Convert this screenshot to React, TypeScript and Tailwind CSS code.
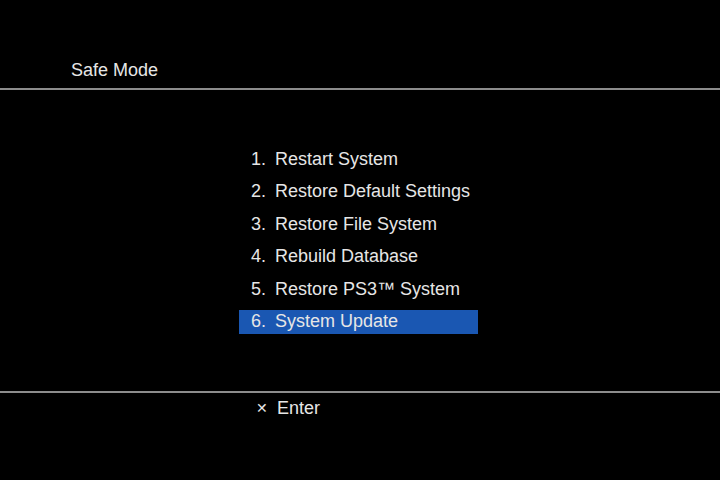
const items = [
  "Restart System",
  "Restore Default Settings",
  "Restore File System",
  "Rebuild Database",
  "Restore PS3\u2122 System",
  "System Update",
]

export default function App() {
  const selected = 5
  return (
    <div
      className="flex h-[480px] w-[720px] flex-col bg-black text-[#e6e6e6]"
      style={{ fontFamily: '"Liberation Sans", Arial, sans-serif' }}
    >
      <div className="flex h-[88px] items-end pb-[6px] pl-[71px]">
        <span className="text-[18px] leading-[24px]">Safe Mode</span>
      </div>
      <div className="h-[2px] bg-[#8c8c8c]" />

      <div className="flex flex-1 flex-col gap-[8.5px] pl-[239px] pt-[57px]">
        {items.map((name, i) => (
          <div
            key={name}
            className={
              i === selected
                ? "flex h-[24px] w-[239px] items-center bg-[#1a57b2] pl-[12px] text-[18px]"
                : "flex h-[24px] w-[239px] items-center pl-[12px] text-[18px]"
            }
          >
            <span className="w-[24px]">{i + 1}.</span>
            <span>{name}</span>
          </div>
        ))}
      </div>

      <div className="h-[2px] bg-[#8c8c8c]" />
      <div className="flex h-[87px] items-start pl-[256px] pt-[3px]">
        <span className="flex h-[24px] items-center text-[18px]">
          <span className="mr-[9px] text-[14px]">✕</span>
          Enter
        </span>
      </div>
    </div>
  )
}
